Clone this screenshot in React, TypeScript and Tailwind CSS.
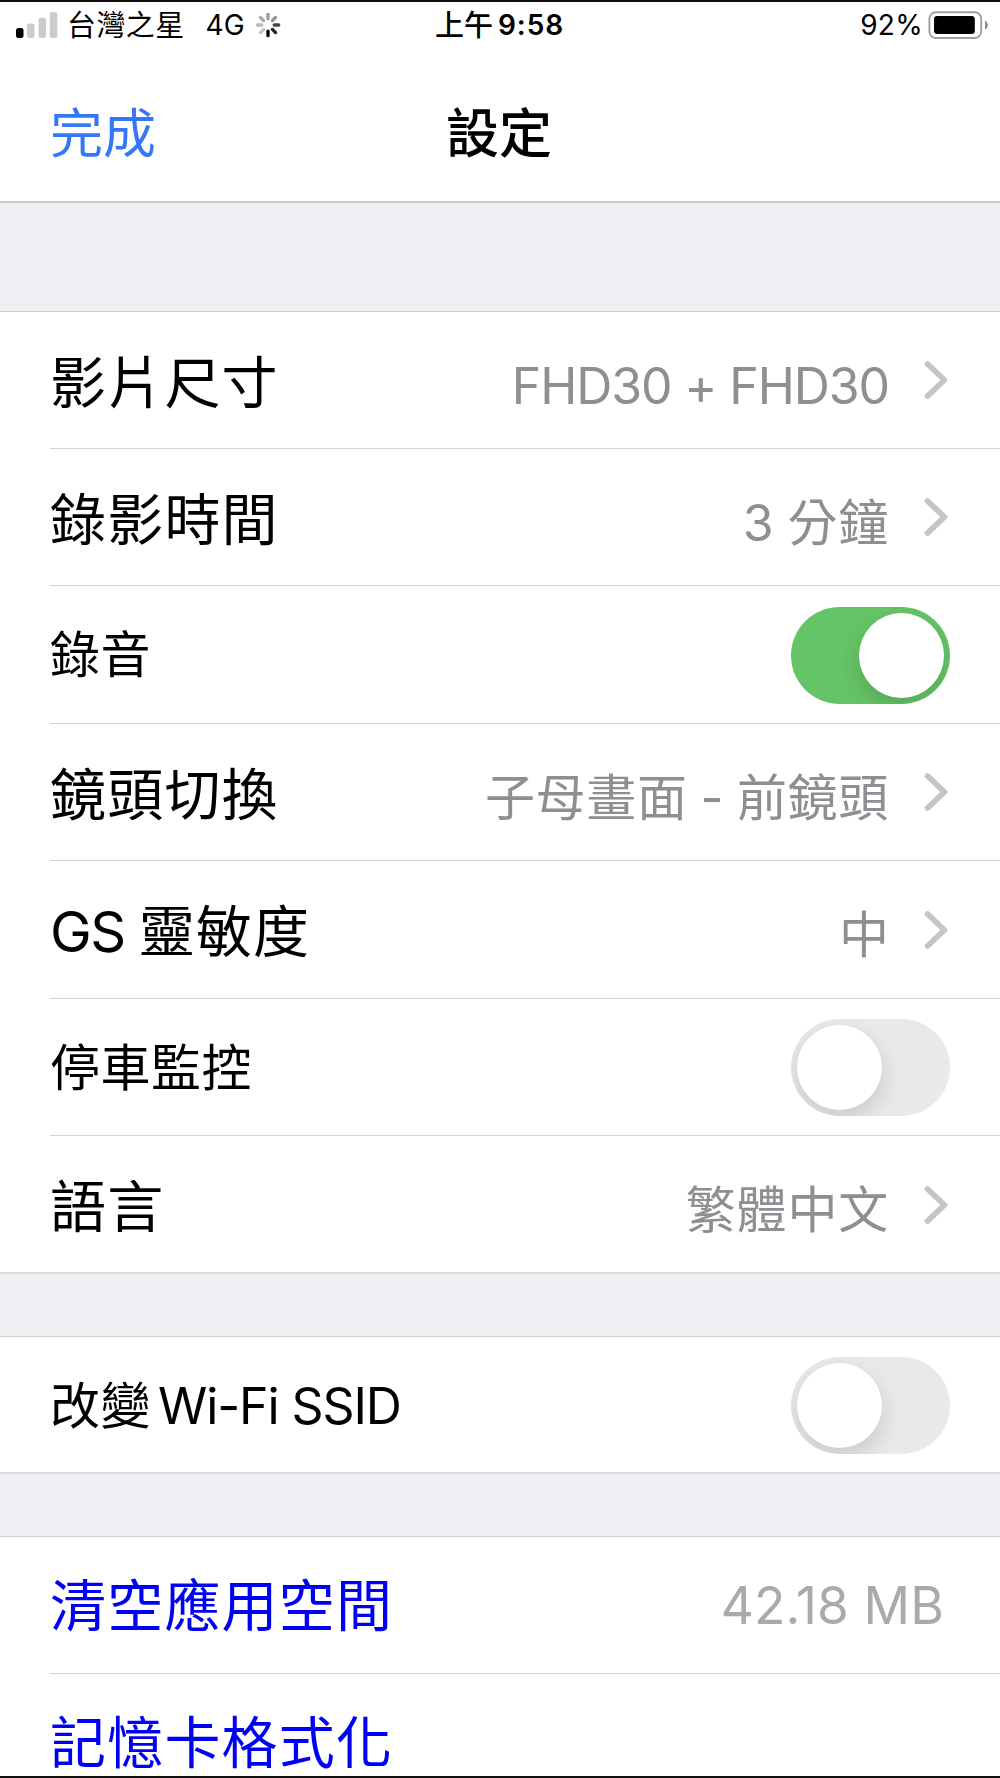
import type { ReactNode } from "react";

const Chevron = () => (
  <svg className="ml-[35px] mr-[2px] mt-[1px] h-[40px] w-[24px] shrink-0" viewBox="0 0 24 40" fill="none">
    <path
      d="M3.6 4 L20.4 20 L3.6 36"
      stroke="#c5c5c7"
      strokeWidth="5.8"
      strokeLinecap="round"
      strokeLinejoin="round"
    />
  </svg>
);

const Toggle = ({ on = false }: { on?: boolean }) => (
  <div
    className={`mt-[2px] flex h-[97px] w-[159px] shrink-0 items-center overflow-hidden rounded-full px-[6px] ${
      on ? "justify-end bg-[#65c466]" : "justify-start bg-[#e9e9e9]"
    }`}
  >
    <div className="size-[85px] rounded-full bg-white shadow-[0_9px_22px_rgba(0,0,0,0.14)]" />
  </div>
);

const SignalBars = () => (
  <svg className="h-[28px] w-[44px]" viewBox="0 0 44 28">
    <rect x="1" y="17" width="7.5" height="10" rx="2.5" fill="#000" />
    <rect x="12" y="12.5" width="7.5" height="14.5" rx="2.5" fill="#cbcbcb" />
    <rect x="23.5" y="6.8" width="7.5" height="20.2" rx="2.5" fill="#cbcbcb" />
    <rect x="34.8" y="1" width="7.5" height="26" rx="2.5" fill="#cbcbcb" />
  </svg>
);

const spokes = ["#999", "#929292", "#444", "#222", "#000", "#c4c4c4", "#b8b8b8", "#aaa"];

const Spinner = () => (
  <svg className="ml-[10px] h-[26px] w-[26px]" viewBox="-13 -13 26 26">
    {spokes.map((color, i) => (
      <path
        key={i}
        d="M0 -6.2V-10.7"
        stroke={color}
        strokeWidth="3.3"
        strokeLinecap="round"
        transform={`rotate(${i * 45})`}
      />
    ))}
  </svg>
);

const Battery = () => (
  <svg className="ml-[5px] h-[28px] w-[62px]" viewBox="0 0 62 28">
    <rect x="1.4" y="1.2" width="51.8" height="25.8" rx="6.5" fill="#fff" stroke="#a0a0a0" strokeWidth="1.9" />
    <rect x="6" y="5" width="40.8" height="18" rx="3.2" fill="#000" />
    <path d="M57 9.3 Q60 11 60 14 Q60 17 57 18.7Z" fill="#8f8f8f" />
  </svg>
);

type RowProps = {
  label: ReactNode;
  value?: ReactNode;
  chevron?: boolean;
  toggle?: "on" | "off";
  size?: "large" | "small";
  height?: string;
  last?: boolean;
  link?: boolean;
};

const Row = ({ label, value, chevron, toggle, size = "large", height = "h-[137.5px]", last, link }: RowProps) => (
  <div className={`bg-white pl-[50px] ${height}`}>
    <div
      className={`flex h-full items-center justify-between pr-[50px] ${
        last ? "" : "border-b-[1.5px] border-[#d3d3d5]"
      }`}
    >
      <div
        className={`whitespace-nowrap leading-none ${
          size === "large" ? "text-[56px] tracking-[1.2px]" : "text-[50px] tracking-[0.5px]"
        } ${link ? "pt-[2px] text-[#0000f5]" : toggle ? "pt-[2px] text-black" : "pt-[6px] text-black"}`}
      >
        {label}
      </div>
      {value && (
        <div className="flex items-center">
          <div
            className={`whitespace-nowrap leading-none ${
              link
                ? "pr-[6px] pt-[2px] text-[51.5px] tracking-[0.1px] text-[#aaaaaa]"
                : "pt-[12px] text-[50px] text-[#8e8e93]"
            }`}
          >
            {value}
          </div>
          {chevron && <Chevron />}
        </div>
      )}
      {toggle && <Toggle on={toggle === "on"} />}
    </div>
  </div>
);

const App = () => {
  return (
    <div
      lang="zh-Hant"
      className="flex h-[1778px] w-[1000px] flex-col overflow-hidden border-y-2 border-[#111] bg-[#eeeef3] font-['Inter','Noto_Sans_CJK_TC',sans-serif] text-black"
    >
      <header className="h-[201px] shrink-0 border-b-2 border-[#c8c8ca] bg-white">
        <div className="grid h-[46px] grid-cols-[1fr_auto_1fr] items-center pl-[15px] pr-[10px] text-[28px] leading-none">
          <div className="flex items-center">
            <SignalBars />
            <span className="ml-[8px] text-[29px] tracking-[0.4px]">台灣之星</span>
            <span className="ml-[21px]">4G</span>
            <Spinner />
          </div>
          <div className="flex items-center pr-[6px]">
            <span className="text-[29px] font-medium">上午</span>
            <span className="ml-[5px] font-semibold tracking-[0.9px]">9:58</span>
          </div>
          <div className="flex items-center justify-end">
            <span className="tracking-[0.3px]">92%</span>
            <Battery />
          </div>
        </div>
        <div className="grid h-[153px] grid-cols-3 items-center px-[50px] pt-[19px] text-[53px] leading-none">
          <span className="text-[#3478f6]">完成</span>
          <h1 className="pr-[2px] text-center font-medium">設定</h1>
        </div>
      </header>

      <main className="flex flex-col">
        <section className="mt-[108px] border-b-2 border-t border-b-[#dadadc] border-t-[#cdcdd0]">
          <Row
            label="影片尺寸"
            value={<span className="tracking-[-1.1px]">FHD30 + FHD30</span>}
            chevron
            height="h-[136.5px]"
          />
          <Row
            label="錄影時間"
            value={<span className="tracking-[0.8px] [word-spacing:-2px]">3 分鐘</span>}
            chevron
          />
          <Row label="錄音" toggle="on" size="small" />
          <Row
            label="鏡頭切換"
            value={<span className="tracking-[0.7px] [word-spacing:-2px]">子母畫面 - 前鏡頭</span>}
            chevron
          />
          <Row
            label={<><span className="tracking-[-1.5px]">GS</span><span className="ml-[14px]">靈敏度</span></>}
            value="中"
            chevron
          />
          <Row label="停車監控" toggle="off" size="small" />
          <Row
            label="語言"
            value={<span className="tracking-[0.8px]">繁體中文</span>}
            chevron
            last
            height="h-[136px]"
          />
        </section>

        <section className="mt-[62px] border-b-2 border-t border-b-[#dadadc] border-t-[#cdcdd0]">
          <Row
            label={<>改變<span className="ml-[7px] tracking-[-1.1px]">Wi-Fi SSID</span></>}
            toggle="off"
            size="small"
            last
            height="h-[135px]"
          />
        </section>

        <section className="mt-[62px] border-t border-[#cdcdd0]">
          <Row label="清空應用空間" value="42.18 MB" link height="h-[136.5px]" />
          <Row label="記憶卡格式化" link last />
        </section>
      </main>
    </div>
  );
};

export default App;
